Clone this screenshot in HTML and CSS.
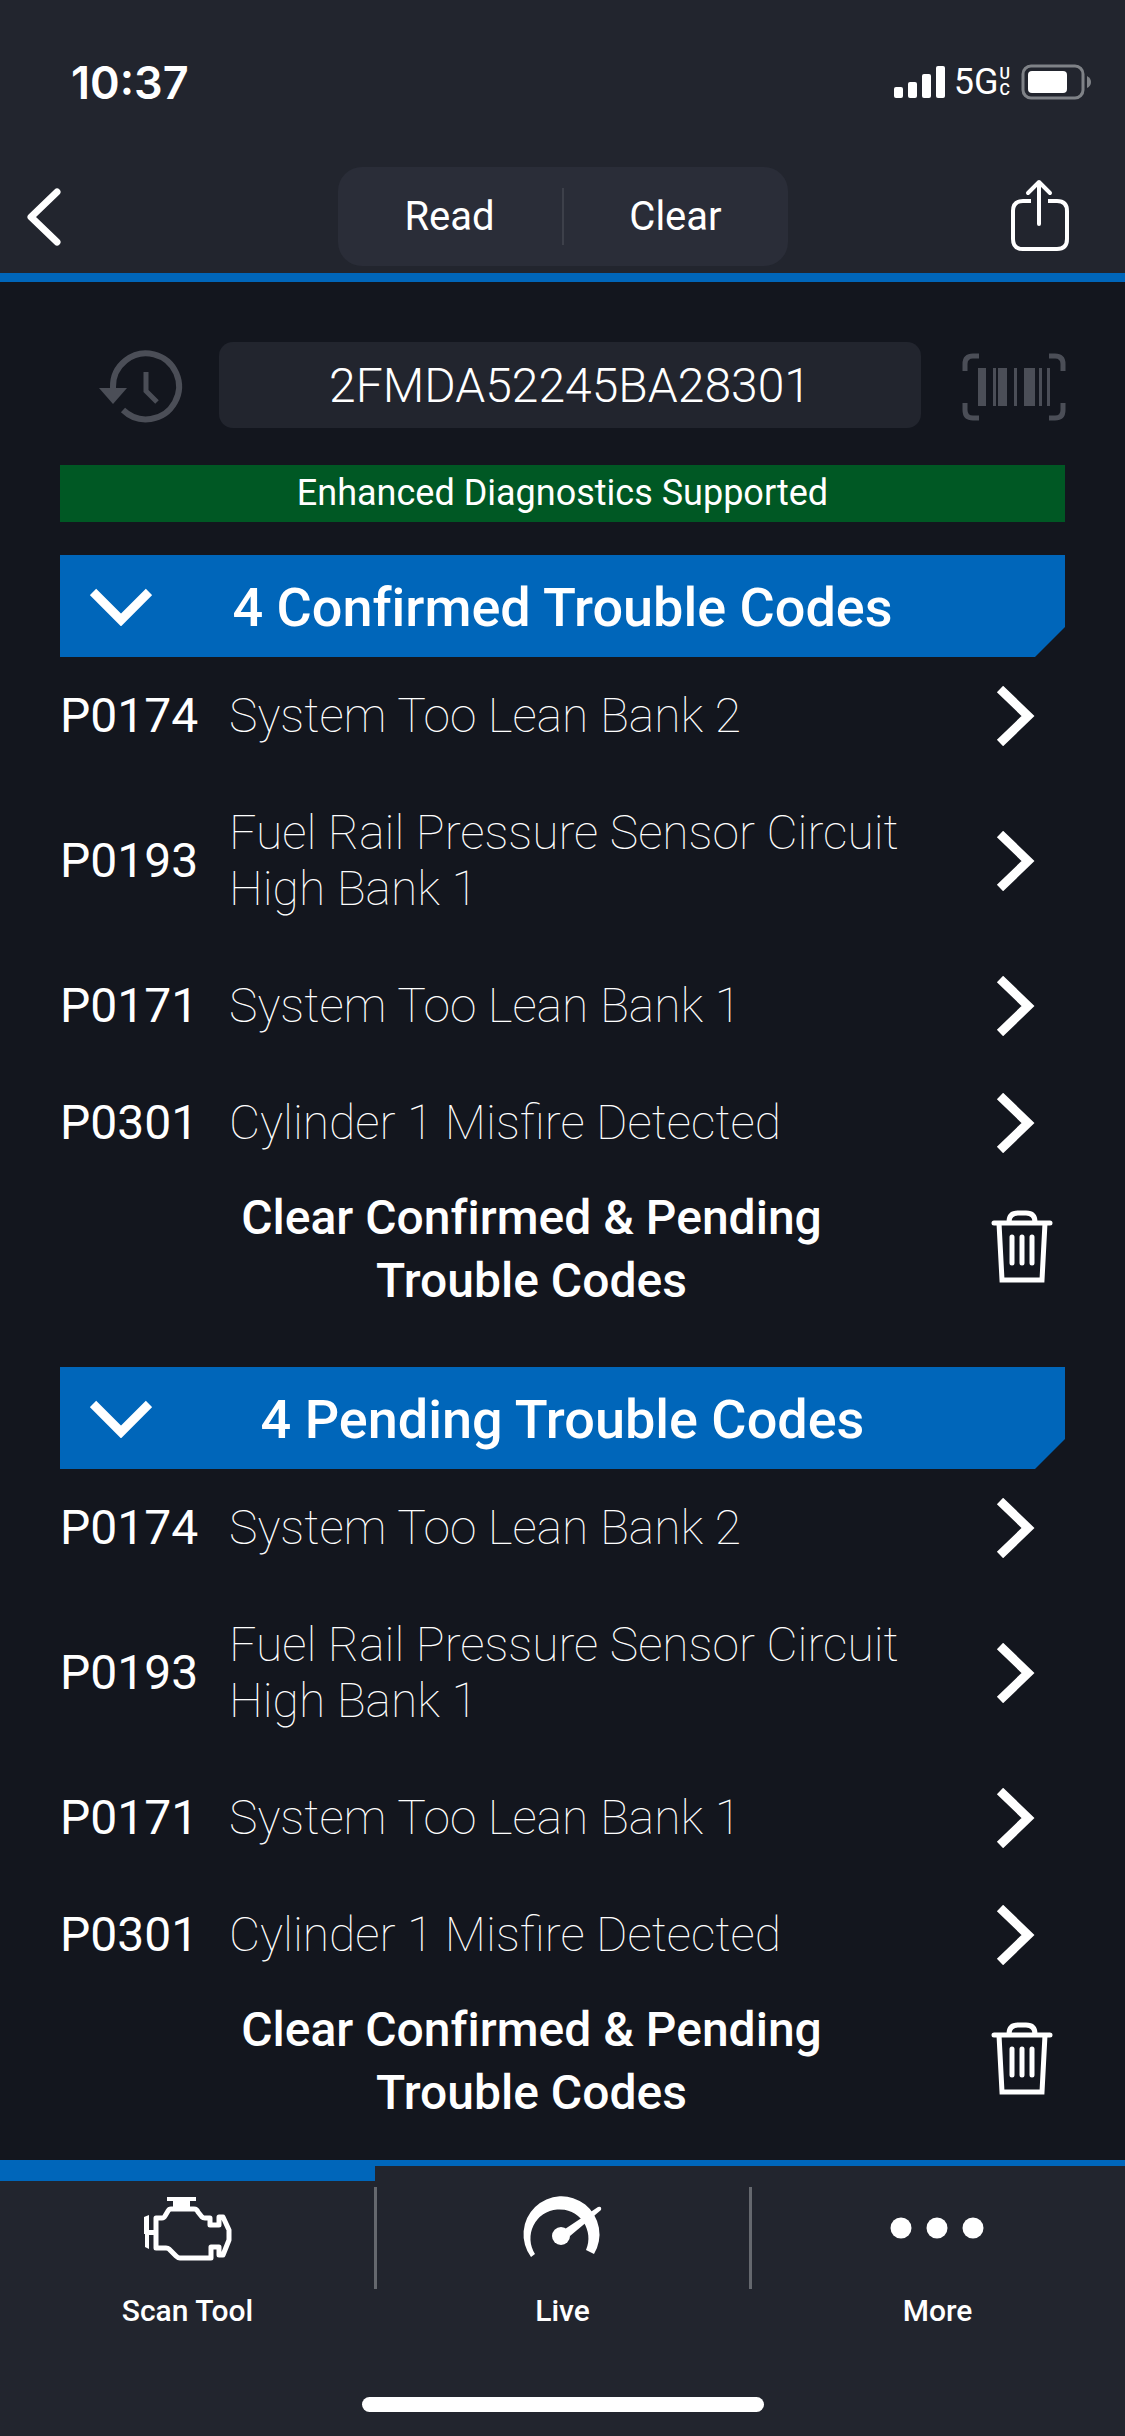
FILE: index.html
```html
<!DOCTYPE html>
<html lang="en">
<head>
    <meta charset="UTF-8">
    <meta name="viewport" content="width=device-width, initial-scale=1.0">
    <title>Trouble Codes</title>
    <link rel="stylesheet" href="styles.css">
</head>
<body>
    <!-- shared icons -->
    <svg class="sprite" aria-hidden="true">
        <symbol id="icon-down" viewBox="0 0 62 38">
            <path d="M3 4L31 32L59 4" fill="none" stroke="#fff" stroke-width="9"/>
        </symbol>
        <symbol id="icon-next" viewBox="0 0 40 60">
            <path d="M5 3L33 30L5 57" fill="none" stroke="#fff" stroke-width="9"/>
        </symbol>
        <symbol id="icon-trash" viewBox="0 0 62 74">
            <path d="M18 13Q18 4 27 4H35Q44 4 44 13M3 14H59" fill="none" stroke="#fff" stroke-width="5" stroke-linecap="round"/>
            <path d="M8 14L11 71H51L54 14" fill="none" stroke="#fff" stroke-width="5"/>
            <path d="M21 28V54M31 28V54M41 28V54" fill="none" stroke="#fff" stroke-width="5" stroke-linecap="round"/>
        </symbol>
    </svg>

    <header id="top">
        <div class="status">
            <span class="time">10:37</span>
            <div class="signal">
                <svg width="52" height="34" viewBox="0 0 52 34" fill="#fff">
                    <rect x="0" y="22" width="9" height="11" rx="2"/>
                    <rect x="14" y="17" width="9" height="16" rx="2"/>
                    <rect x="28" y="9" width="9" height="24" rx="2"/>
                    <rect x="42" y="1" width="9" height="32" rx="2"/>
                </svg>
                <span class="network">5G</span>
                <span class="band"><span>U</span><span>C</span></span>
                <svg width="70" height="36" viewBox="0 -1 70 36">
                    <rect x="1" y="1" width="60" height="32" rx="8" fill="none" stroke="#7f8287" stroke-width="3"/>
                    <rect x="6" y="6" width="39" height="22" rx="4" fill="#fff"/>
                    <path d="M65 11Q69 13 69 17Q69 21 65 23Z" fill="#7f8287"/>
                </svg>
            </div>
        </div>
        <nav class="toolbar">
            <button class="icon-button" aria-label="Back">
                <svg width="40" height="60" viewBox="0 0 40 60">
                    <path d="M33 5L7 30L33 55" fill="none" stroke="#fff" stroke-width="7" stroke-linecap="round" stroke-linejoin="round"/>
                </svg>
            </button>
            <div class="segment">
                <button>Read</button>
                <button>Clear</button>
            </div>
            <button class="icon-button" aria-label="Share">
                <svg width="58" height="76" viewBox="0 0 58 76">
                    <path d="M20 22H12Q2 22 2 32V60Q2 70 12 70H46Q56 70 56 60V32Q56 22 46 22H37" fill="none" stroke="#fff" stroke-width="4"/>
                    <path d="M28 3V45M17 14L28 3L39 14" fill="none" stroke="#fff" stroke-width="4" stroke-linecap="round" stroke-linejoin="round"/>
                </svg>
            </button>
        </nav>
    </header>

    <main id="main">
        <div class="vin">
            <button class="icon-button" aria-label="History">
                <svg width="84" height="74" viewBox="0 0 84 74">
                    <path d="M14 39V37A33 33 0 1 1 24 60" fill="none" stroke="#4b4e57" stroke-width="6"/>
                    <path d="M0 38H28L14 54Z" fill="#4b4e57"/>
                    <path d="M47 22V41L58 52" fill="none" stroke="#4b4e57" stroke-width="5"/>
                </svg>
            </button>
            <input type="text" value="2FMDA52245BA28301" aria-label="VIN">
            <button class="icon-button" aria-label="Scan barcode">
                <svg width="102" height="66" viewBox="0 0 102 66">
                    <path d="M2 17V10Q2 2 10 2H16M86 2H92Q100 2 100 10V17M100 49V56Q100 64 92 64H86M16 64H10Q2 64 2 56V49" fill="none" stroke="#4b4e57" stroke-width="5"/>
                    <path d="M15 14h8v38h-8zM30 14h3v38h-3zM35 14h9v38h-9zM51 14h3v38h-3zM61 14h11v38h-11zM76 14h3v38h-3zM84 14h3v38h-3z" fill="#4b4e57"/>
                </svg>
            </button>
        </div>
        <p class="supported">Enhanced Diagnostics Supported</p>

        <section class="codes">
            <button class="codes-title">
                <svg width="62" height="38"><use href="#icon-down"/></svg>
                <span>4 Confirmed Trouble Codes</span>
            </button>
            <a class="row" href="#P0174"><b>P0174</b><span>System Too Lean Bank 2</span><svg width="40" height="60"><use href="#icon-next"/></svg></a>
            <a class="row" href="#P0193"><b>P0193</b><span>Fuel Rail Pressure Sensor Circuit High Bank 1</span><svg width="40" height="60"><use href="#icon-next"/></svg></a>
            <a class="row" href="#P0171"><b>P0171</b><span>System Too Lean Bank 1</span><svg width="40" height="60"><use href="#icon-next"/></svg></a>
            <a class="row" href="#P0301"><b>P0301</b><span>Cylinder 1 Misfire Detected</span><svg width="40" height="60"><use href="#icon-next"/></svg></a>
            <button class="clear">
                <span>Clear Confirmed &amp; Pending Trouble Codes</span>
                <svg width="62" height="74"><use href="#icon-trash"/></svg>
            </button>
        </section>

        <section class="codes">
            <button class="codes-title">
                <svg width="62" height="38"><use href="#icon-down"/></svg>
                <span>4 Pending Trouble Codes</span>
            </button>
            <a class="row" href="#P0174"><b>P0174</b><span>System Too Lean Bank 2</span><svg width="40" height="60"><use href="#icon-next"/></svg></a>
            <a class="row" href="#P0193"><b>P0193</b><span>Fuel Rail Pressure Sensor Circuit High Bank 1</span><svg width="40" height="60"><use href="#icon-next"/></svg></a>
            <a class="row" href="#P0171"><b>P0171</b><span>System Too Lean Bank 1</span><svg width="40" height="60"><use href="#icon-next"/></svg></a>
            <a class="row" href="#P0301"><b>P0301</b><span>Cylinder 1 Misfire Detected</span><svg width="40" height="60"><use href="#icon-next"/></svg></a>
            <button class="clear">
                <span>Clear Confirmed &amp; Pending Trouble Codes</span>
                <svg width="62" height="74"><use href="#icon-trash"/></svg>
            </button>
        </section>
    </main>

    <footer id="bottom">
        <nav class="tabs">
            <a class="active" href="#scan">
                <svg width="90" height="70" viewBox="0 0 90 70">
                    <path d="M24 2H53V6H47V13H30V6H24Z" fill="#fff"/>
                    <path d="M28 14H51Q54 14 55 17L59 22Q60 23 62 23H67V30H76V22H80L86 35V45L80 60H76V52H68V63H37Q35 63 33 61L26 54Q25 53 23 53H13V23H19Q21 23 22 21L25 16Q26 14 28 14Z" fill="none" stroke="#fff" stroke-width="5" stroke-linejoin="round"/>
                    <path d="M1 22L6 20V35H11V40H6V54L2 52V39H1Z" fill="#fff"/>
                </svg>
                <span>Scan Tool</span>
            </a>
            <a href="#live">
                <svg width="82" height="70" viewBox="0 0 82 70">
                    <path d="M9 62A38 38 0 1 1 72 59L64 55A29 29 0 1 0 13 59Z" fill="#fff"/>
                    <circle cx="39" cy="41" r="9" fill="#fff"/>
                    <path d="M43 34L76 12Q80 11 79 15L48 41Z" fill="#fff"/>
                </svg>
                <span>Live</span>
            </a>
            <a href="#more">
                <svg width="94" height="70" viewBox="0 0 94 70" fill="#fff">
                    <circle cx="10" cy="33" r="10.5"/>
                    <circle cx="46" cy="33" r="10.5"/>
                    <circle cx="82" cy="33" r="10.5"/>
                </svg>
                <span>More</span>
            </a>
        </nav>
        <div class="home"></div>
    </footer>
</body>
</html>
```
FILE: styles.css
```css
*{
    margin: 0;
    padding: 0;
    box-sizing: border-box;
}
body{
    min-height: 100vh;
    display: flex;
    flex-direction: column;
    background-color: #13161e;
    color: #fff;
    font-family: Roboto, "Liberation Sans", sans-serif;
}
button{
    border: none;
    background: none;
    color: inherit;
    font-family: inherit;
    font-variant-ligatures: none;
}
a{
    color: inherit;
    text-decoration: none;
}
svg{
    display: block;
    flex-shrink: 0;
    overflow: visible;
}
.sprite{
    position: absolute;
    width: 0;
    height: 0;
}

/* status bar and toolbar */
#top{
    background-color: #22252e;
    border-bottom: 9px solid #0066ba;
}
.status{
    display: flex;
    justify-content: space-between;
    align-items: center;
    height: 164px;
    padding: 0 33px 0 71px;
}
.time{
    font-family: Inter, "Liberation Sans", sans-serif;
    font-size: 45px;
    font-weight: 600;
}
.signal{
    display: flex;
    align-items: center;
}
.network{
    margin-left: 8px;
    font-size: 36px;
}
.band{
    display: flex;
    flex-direction: column;
    margin: 0 12px 0 1px;
    font-size: 16px;
    line-height: 16px;
    font-weight: 500;
}
.toolbar{
    display: flex;
    justify-content: space-between;
    align-items: center;
    height: 109px;
    padding: 0 56px 4px 24px;
}
.toolbar .icon-button{
    width: 58px;
}
.segment{
    display: flex;
    width: 40vw;
    height: 99px;
    padding: 21px 0;
    margin-left: 32px;
    border-radius: 24px;
    background-color: #2a2d38;
}
.segment button{
    flex: 1;
    font-size: 40px;
}
.segment button + button{
    border-left: 2px solid #3d404a;
}

/* VIN */
#main{
    flex: 1;
    padding: 60px 60px 0;
}
.vin{
    display: flex;
    align-items: center;
    justify-content: space-between;
    padding-left: 39px;
    margin-bottom: 37px;
}
.vin .icon-button{
    padding-top: 4px;
}
.vin input{
    flex: 1;
    min-width: 0;
    height: 86px;
    margin: 0 42px 0 36px;
    border: none;
    border-radius: 14px;
    background-color: #22252e;
    color: #fff;
    font-family: inherit;
    font-size: 48px;
    font-weight: 300;
    text-align: center;
}
.supported{
    height: 57px;
    margin-bottom: 33px;
    background-color: #005824;
    font-size: 36px;
    line-height: 57px;
    text-align: center;
}

/* trouble codes */
.codes{
    margin-bottom: 55px;
}
.codes:last-child{
    margin-bottom: 36px;
}
.codes-title{
    display: grid;
    grid-template-columns: 62px 1fr 62px;
    align-items: center;
    width: 100%;
    height: 102px;
    padding: 2px 30px 0;
    background-color: #0066ba;
    clip-path: polygon(0 0, 100% 0, 100% calc(100% - 30px), calc(100% - 30px) 100%, 0 100%);
    font-size: 54px;
    font-weight: 500;
}
.row{
    display: grid;
    grid-template-columns: 140px 1fr 40px;
    column-gap: 29px;
    align-items: center;
    padding: 31px 30px 30px 0;
    font-size: 48px;
    line-height: 56px;
}
.row b{
    font-weight: 400;
}
.row span{
    font-weight: 100;
}
.row svg{
    margin: -2px 0;
}
.clear{
    display: flex;
    align-items: center;
    width: 100%;
    padding: 5px 12px 0;
    font-size: 48px;
    line-height: 63px;
    font-weight: 500;
}
.clear span{
    flex: 1;
    padding: 0 150px;
}
.clear svg{
    margin-bottom: 6px;
}

/* tab bar */
#bottom{
    height: 276px;
    border-top: 6px solid #0066ba;
    background-color: #22252e;
}
.tabs{
    display: flex;
    height: 190px;
}
.tabs a{
    flex: 1;
    position: relative;
    display: flex;
    flex-direction: column;
    align-items: center;
    gap: 28px;
    padding-top: 29px;
    font-size: 30px;
    line-height: 36px;
    font-weight: 500;
}
.tabs .active::before{
    content: "";
    position: absolute;
    top: 0;
    left: 0;
    width: 100%;
    height: 15px;
    background-color: #0066ba;
}
.tabs a + a::after{
    content: "";
    position: absolute;
    top: 21px;
    left: -1px;
    width: 3px;
    height: 102px;
    background-color: #65686e;
}
.home{
    width: 402px;
    height: 15px;
    margin: 41px auto 0;
    border-radius: 8px;
    background-color: #fff;
}
```
